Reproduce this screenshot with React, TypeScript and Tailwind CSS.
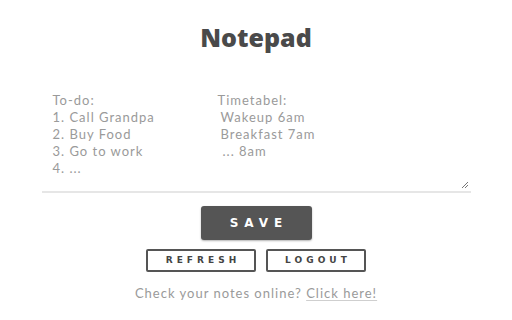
export default function App() {
  return (
    <div className="flex h-[320px] w-[512px] flex-col items-center bg-white font-['Lato',sans-serif]">
      <h1 className="mt-[22px] text-[25px] font-extrabold leading-[30px] text-[#4a4a4a] font-['Open_Sans',sans-serif]">
        Notepad
      </h1>
      <div className="relative mt-[38px] h-[103px] w-[429px] border-b-2 border-[#e6e6e6] pl-[11px] pt-[2px]">
        <div className="flex text-[13px] leading-[17px] tracking-[1px] text-[#9a9a9a]">
          <div className="w-[165px]">
            <p>To-do:</p>
            <p>1. Call Grandpa</p>
            <p>2. Buy Food</p>
            <p>3. Go to work</p>
            <p>4. ...</p>
          </div>
          <div>
            <p>Timetabel:</p>
            <p className="pl-[3px]">Wakeup 6am</p>
            <p className="pl-[3px]">Breakfast 7am</p>
            <p className="pl-[5px]">... 8am</p>
          </div>
        </div>
        <svg className="absolute bottom-[2px] right-[2px]" width="8" height="8" viewBox="0 0 8 8">
          <path d="M7 1 L1 7 M7 4 L4 7" stroke="#777" strokeWidth="1" />
        </svg>
      </div>
      <button className="mt-[13px] flex h-[34px] w-[111px] items-center justify-center rounded-[3px] bg-[#555555] pl-[6px] text-[12px] font-black tracking-[0.5em] text-white font-['DejaVu_Sans',sans-serif] shadow-[0_1px_2px_rgba(0,0,0,0.3)]">
        SAVE
      </button>
      <div className="mt-[9px] flex gap-[10px]">
        <button className="flex h-[23px] w-[110px] items-center justify-center rounded-[2px] border-2 border-[#555555] pl-[4px] text-[9px] font-black tracking-[0.45em] text-[#444] font-['DejaVu_Sans',sans-serif]">
          REFRESH
        </button>
        <button className="flex h-[23px] w-[100px] items-center justify-center rounded-[2px] border-2 border-[#555555] pl-[4px] text-[9px] font-black tracking-[0.45em] text-[#444] font-['DejaVu_Sans',sans-serif]">
          LOGOUT
        </button>
      </div>
      <p className="mt-[13px] text-[13px] leading-[17px] tracking-[1px] text-[#9a9a9a]">
        Check your notes online?{' '}
        <span className="underline decoration-[#cfcfcf] underline-offset-2">Click here!</span>
      </p>
    </div>
  );
}
